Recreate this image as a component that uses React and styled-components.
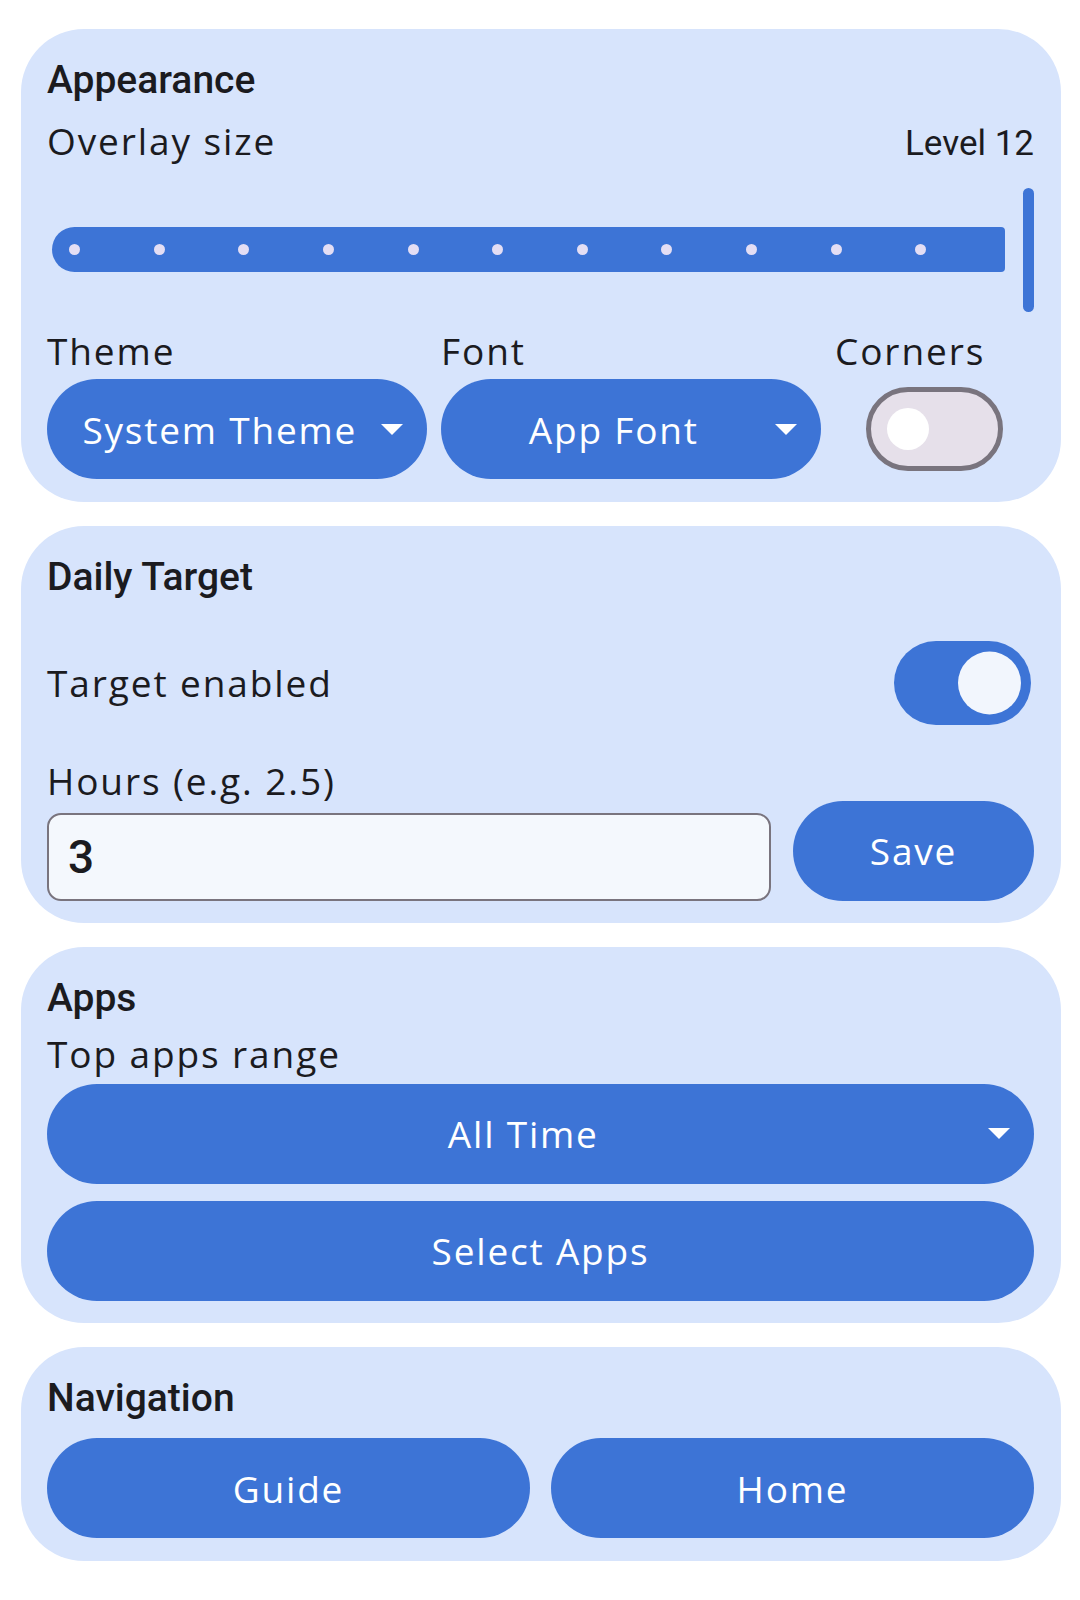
import React, { useState } from 'react';
import styled, { createGlobalStyle } from 'styled-components';

const GlobalStyle = createGlobalStyle`
    body {
        margin: 0;
        background: #ffffff;
        font-family: 'Open Sans', 'Noto Sans', sans-serif;
        color: #1b1b1f;
    }
`;

const Page = styled.div`
    display: flex;
    flex-direction: column;
    gap: 24px;
    padding: 29px 19px 40px 21px;
`;

const Card = styled.section`
    display: flex;
    flex-direction: column;
    background: #d7e4fc;
    border-radius: 63px;
    padding: 28px 27px 22.5px 26px;
`;

const Title = styled.h2`
    margin: 0;
    font-family: Roboto, 'Noto Sans', sans-serif;
    font-weight: 500;
    font-size: 39px;
    line-height: 46px;
    color: #1b1b1f;
`;

const Label = styled.div`
    font-family: 'Open Sans', 'Noto Sans', sans-serif;
    font-size: 37px;
    line-height: 40px;
    letter-spacing: 1.9px;
    color: #1b1b1f;
    margin-top: ${(p) => p.$top || 0}px;
    white-space: nowrap;
`;

const SizeRow = styled.div`
    display: flex;
    justify-content: space-between;
    align-items: baseline;
    margin-top: 18px;
`;

const LevelText = styled.span`
    font-family: Roboto, 'Noto Sans', sans-serif;
    font-size: 35px;
    line-height: 40px;
    color: #1b1b1f;
`;

const Slider = styled.div`
    display: flex;
    align-items: center;
    gap: 18px;
    height: 124px;
    margin-top: 23.5px;
`;

const Track = styled.div`
    flex: 1;
    height: 45px;
    margin-left: 5px;
    border-radius: 22.5px 4px 4px 22.5px;
    background: #3d74d6;
    display: flex;
    align-items: center;
    gap: 73.6px;
    padding-left: 17.2px;
`;

const Dot = styled.span`
    width: 11px;
    height: 11px;
    border-radius: 50%;
    background: #e4def4;
    flex-shrink: 0;
`;

const Thumb = styled.div`
    width: 11px;
    height: 124px;
    border-radius: 6px;
    background: #3d74d6;
`;

const PickerGrid = styled.div`
    display: grid;
    grid-template-columns: 380px 380px 1fr;
    column-gap: 14px;
    margin-top: 19.5px;
`;

const Field = styled.div`
    display: flex;
    flex-direction: column;
    gap: 8px;
`;

const PillButton = styled.button`
    display: flex;
    align-items: center;
    justify-content: center;
    height: 100px;
    width: 100%;
    border: none;
    border-radius: 50px;
    background: #3d74d6;
    color: #ffffff;
    font-family: 'Open Sans', 'Noto Sans', sans-serif;
    font-size: 37px;
    letter-spacing: 1.8px;
    white-space: nowrap;
    padding: 0;
    margin-top: ${(p) => p.$top || 0}px;
    cursor: pointer;
`;

const DropButton = styled(PillButton)`
    padding: 0 24.5px 0 36px;
    gap: 24px;
`;

const DropText = styled.span`
    flex: 1;
    text-align: center;
`;

const Caret = styled.span`
    width: 0;
    height: 0;
    border-left: 11.5px solid transparent;
    border-right: 11.5px solid transparent;
    border-top: 11px solid #ffffff;
    flex-shrink: 0;
`;

const SwitchSlot = styled.div`
    height: 100px;
    display: flex;
    align-items: center;
    justify-content: center;
`;

const SwitchTrack = styled.button`
    box-sizing: border-box;
    position: relative;
    width: 137px;
    height: 84px;
    border-radius: 42px;
    padding: 0;
    cursor: pointer;
    border: ${(p) => (p.$on ? 'none' : '5.5px solid #79747e')};
    background: ${(p) => (p.$on ? '#3d74d6' : '#e6e0ea')};
    margin-right: ${(p) => p.$inset || 0}px;
    flex-shrink: 0;
`;

/* knob sits over the track, so it is placed absolutely */
const SwitchKnob = styled.span`
    position: absolute;
    top: 50%;
    transform: translateY(-50%);
    border-radius: 50%;
    width: ${(p) => (p.$on ? 63 : 42)}px;
    height: ${(p) => (p.$on ? 63 : 42)}px;
    left: ${(p) => (p.$on ? 64 : 15.5)}px;
    background: ${(p) => (p.$on ? '#f2f6fd' : '#ffffff')};
`;

const ToggleRow = styled.div`
    display: flex;
    align-items: center;
    justify-content: space-between;
    height: 84px;
    margin-top: 41px;
`;

const SaveRow = styled.div`
    display: flex;
    align-items: flex-end;
    gap: 22px;
`;

const HoursInput = styled.input`
    flex: 1;
    min-width: 0;
    box-sizing: border-box;
    height: 88px;
    border: 2.5px solid #79747e;
    border-radius: 14px;
    background: #f4f8fd;
    padding: 0 19px;
    font-family: Roboto, 'Noto Sans', sans-serif;
    font-weight: 500;
    font-size: 46px;
    color: #1b1b1f;
    outline: none;
`;

const SaveButton = styled(PillButton)`
    width: 241px;
    flex-shrink: 0;
`;

const NavGrid = styled.div`
    display: grid;
    grid-template-columns: 1fr 1fr;
    column-gap: 21px;
    margin-top: 17px;
`;

const Switch = ({ on, inset, onToggle }) => (
    <SwitchTrack $on={on} $inset={inset} onClick={onToggle}>
        <SwitchKnob $on={on} />
    </SwitchTrack>
);

const App = () => {
    const [rounded, setRounded] = useState(false);
    const [targetOn, setTargetOn] = useState(true);
    const [hours, setHours] = useState('3');

    return (
        <>
            <GlobalStyle />
            <Page>
                <Card>
                    <Title>Appearance</Title>
                    <SizeRow>
                        <Label>Overlay size</Label>
                        <LevelText>Level 12</LevelText>
                    </SizeRow>
                    <Slider>
                        <Track>
                            {Array.from({ length: 11 }).map((_, i) => (
                                <Dot key={i} />
                            ))}
                        </Track>
                        <Thumb />
                    </Slider>
                    <PickerGrid>
                        <Field>
                            <Label>Theme</Label>
                            <DropButton>
                                <DropText>System Theme</DropText>
                                <Caret />
                            </DropButton>
                        </Field>
                        <Field>
                            <Label>Font</Label>
                            <DropButton>
                                <DropText>App Font</DropText>
                                <Caret />
                            </DropButton>
                        </Field>
                        <Field>
                            <Label>Corners</Label>
                            <SwitchSlot>
                                <Switch on={rounded} onToggle={() => setRounded(!rounded)} />
                            </SwitchSlot>
                        </Field>
                    </PickerGrid>
                </Card>

                <Card>
                    <Title>Daily Target</Title>
                    <ToggleRow>
                        <Label>Target enabled</Label>
                        <Switch on={targetOn} inset={3} onToggle={() => setTargetOn(!targetOn)} />
                    </ToggleRow>
                    <Label $top={36}>Hours (e.g. 2.5)</Label>
                    <SaveRow>
                        <HoursInput value={hours} onChange={(e) => setHours(e.target.value)} />
                        <SaveButton>Save</SaveButton>
                    </SaveRow>
                </Card>

                <Card>
                    <Title>Apps</Title>
                    <Label $top={13}>Top apps range</Label>
                    <DropButton $top={9.5}>
                        <DropText>All Time</DropText>
                        <Caret />
                    </DropButton>
                    <PillButton $top={17}>Select Apps</PillButton>
                </Card>

                <Card>
                    <Title>Navigation</Title>
                    <NavGrid>
                        <PillButton>Guide</PillButton>
                        <PillButton>Home</PillButton>
                    </NavGrid>
                </Card>
            </Page>
        </>
    );
};

export default App;
